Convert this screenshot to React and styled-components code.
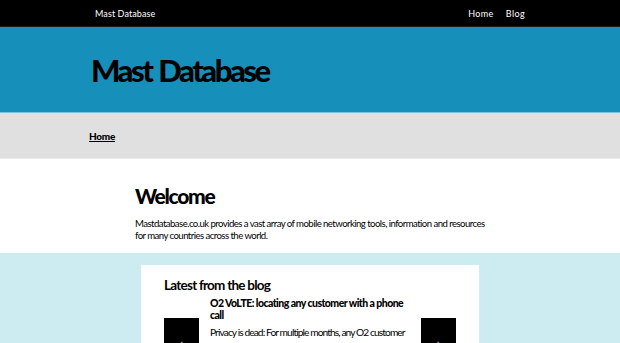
import React from "react";
import styled, { createGlobalStyle } from "styled-components";

const Global = createGlobalStyle`
  html, body {
    margin: 0;
    padding: 0;
    background: #ffffff;
    font-family: "Lato", "Liberation Sans", sans-serif;
    color: #000;
  }
`;

export default function App() {
  return (
    <>
      <Global />
      <TopBar>
        <BarInner>
          <Brand>Mast Database</Brand>
          <Nav>
            <NavLink>Home</NavLink>
            <NavLink>Blog</NavLink>
          </Nav>
        </BarInner>
      </TopBar>
      <Hero>
        <HeroTitle>Mast Database</HeroTitle>
      </Hero>
      <Crumbs>
        <CrumbLink>Home</CrumbLink>
      </Crumbs>
      <Intro>
        <IntroTitle>Welcome</IntroTitle>
        <IntroText>
          Mastdatabase.co.uk provides a vast array of mobile networking tools, information and resources
          for many countries across the world.
        </IntroText>
      </Intro>
      <BlogBand>
        <Card>
          <CardTitle>Latest from the blog</CardTitle>
          <Carousel>
            <ArrowBtn>&#8249;</ArrowBtn>
            <Post>
              <PostTitle>O2 VoLTE: locating any customer with a phone call</PostTitle>
              <PostText>
                Privacy is dead: For multiple months, any O2 customer has had their location exposed to call initiators witho...
              </PostText>
            </Post>
            <ArrowBtn>&#8250;</ArrowBtn>
          </Carousel>
        </Card>
      </BlogBand>
    </>
  );
}

const TopBar = styled.header`
  background: #000;
  height: 26px;
  border-bottom: 1px solid #1b1b1b;
`;
const BarInner = styled.div`
  width: 430px;
  margin: 0 auto;
  height: 100%;
  display: flex;
  align-items: center;
  justify-content: space-between;
`;
const Brand = styled.span`
  color: #fff;
  font-size: 9px;
  letter-spacing: 0.1px;
`;
const Nav = styled.nav`
  display: flex;
  gap: 12px;
`;
const NavLink = styled.a`
  color: #fff;
  font-size: 9px;
  letter-spacing: 0.4px;
`;
const Hero = styled.section`
  background: #168fba;
  height: 85px;
  padding-left: 91px;
  display: flex;
  align-items: center;
  border-bottom: 1px solid #7cc2da;
`;
const HeroTitle = styled.h1`
  margin: 0;
  font-size: 31px;
  font-weight: 900;
  letter-spacing: -2.5px;
  word-spacing: 2px;
`;
const Crumbs = styled.div`
  background: #e0e0e0;
  height: 45px;
  padding-left: 89px;
  display: flex;
  align-items: center;
  border-bottom: 1px solid #ececec;
`;
const CrumbLink = styled.a`
  font-size: 10px;
  font-weight: 900;
  letter-spacing: -0.3px;
  text-decoration: underline;
`;
const Intro = styled.section`
  width: 350px;
  margin: 0 auto;
  padding: 24px 0 15px;
  height: 55px;
`;
const IntroTitle = styled.h2`
  margin: 0 0 10px;
  font-size: 21px;
  font-weight: 900;
  letter-spacing: -1.3px;
`;
const IntroText = styled.p`
  margin: 0;
  font-size: 9.6px;
  line-height: 12px;
  letter-spacing: -0.55px;
`;
const BlogBand = styled.section`
  background: #cdecf1;
  padding-top: 12px;
  min-height: 200px;
`;
const Card = styled.div`
  width: 338px;
  margin: 0 auto;
  background: #fff;
  padding: 12px 23px 20px;
  box-sizing: border-box;
`;
const CardTitle = styled.h3`
  margin: 0 0 4px;
  font-size: 13.5px;
  font-weight: 700;
  letter-spacing: -0.75px;
`;
const Carousel = styled.div`
  display: flex;
  align-items: flex-start;
  gap: 11px;
`;
const ArrowBtn = styled.button`
  flex: 0 0 35px;
  height: 50px;
  margin-top: 21px;
  background: #000;
  color: #fff;
  border: 0;
  font-size: 10px;
  padding: 0;
`;
const Post = styled.div`
  flex: 1;
`;
const PostTitle = styled.h4`
  margin: 0 0 4px;
  font-size: 10.5px;
  font-weight: 900;
  line-height: 12px;
  letter-spacing: -0.55px;
`;
const PostText = styled.p`
  margin: 0;
  font-size: 10.2px;
  line-height: 14px;
  letter-spacing: -0.9px;
`;
